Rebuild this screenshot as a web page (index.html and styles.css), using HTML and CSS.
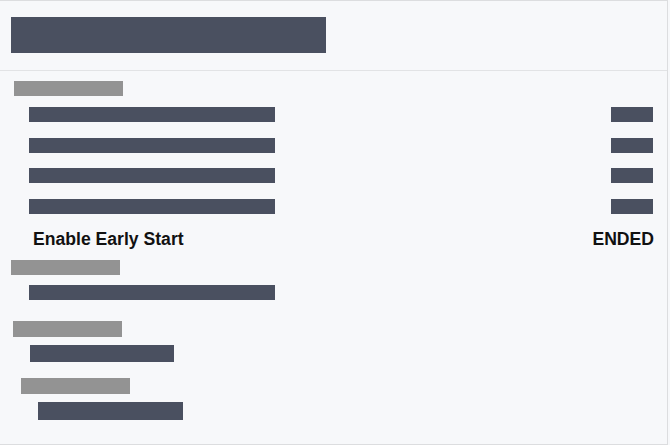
FILE: index.html
```html
<!DOCTYPE html>
<html lang="en">
<head>
<meta charset="UTF-8">
<meta name="viewport" content="width=device-width, initial-scale=1.0">
<title>Schedule</title>
<link rel="stylesheet" href="styles.css">
</head>
<body>
  <div class="panel">
    <div class="header">
      <div class="bar title"></div>
    </div>

    <div class="content">
      <!-- Group one -->
      <div class="group first">
        <div class="label"></div>
        <div class="rows">
          <div class="row"><div class="bar wide"></div><div class="bar tag"></div></div>
          <div class="row"><div class="bar wide"></div><div class="bar tag"></div></div>
          <div class="row"><div class="bar wide"></div><div class="bar tag"></div></div>
          <div class="row"><div class="bar wide"></div><div class="bar tag"></div></div>
        </div>
        <div class="status-row">
          <span>Enable Early Start</span>
          <span>ENDED</span>
        </div>
      </div>

      <!-- Group two -->
      <div class="group second">
        <div class="label"></div>
        <div class="bar wide"></div>
      </div>

      <!-- Group three -->
      <div class="group third">
        <div class="label"></div>
        <div class="bar short"></div>
      </div>

      <!-- Group four -->
      <div class="group fourth">
        <div class="label"></div>
        <div class="bar short"></div>
      </div>
    </div>
  </div>
</body>
</html>
```

FILE: styles.css
```css
body {
  margin: 0;
  padding: 0;
  background-color: #f7f8fa;
  font-family: "Liberation Sans", Arial, sans-serif;
}

.panel {
  width: 668px;
  height: 445px;
  box-sizing: border-box;
  border: 1px solid #dcdddf;
  border-left: none;
  background-color: #f7f8fa;
}

.header {
  height: 70px;
  box-sizing: border-box;
  padding: 16px 0 0 11px;
  border-bottom: 1px solid #e2e3e5;
}

.bar {
  background-color: #4a5060;
}

.title {
  width: 315px;
  height: 36px;
}

.content {
  padding-top: 10px;
}

.label {
  width: 109px;
  height: 15px;
  background-color: #939393;
}

.wide {
  width: 246px;
  height: 15px;
}

.tag {
  width: 42px;
  height: 15px;
}

.short {
  height: 17px;
}

/* group one */
.first .label {
  margin-left: 14px;
}

.rows {
  display: flex;
  flex-direction: column;
  gap: 15.5px;
  margin-top: 11px;
  padding: 0 14px 0 29px;
}

.row {
  display: flex;
  justify-content: space-between;
}

.status-row {
  display: flex;
  justify-content: space-between;
  margin-top: 15px;
  padding: 0 13px 0 33px;
  font-size: 17.6px;
  font-weight: bold;
  line-height: 20px;
  color: #111;
}

/* group two */
.second {
  margin-top: 11px;
}

.second .label {
  margin-left: 11px;
}

.second .wide {
  margin: 10px 0 0 29px;
}

/* group three */
.third {
  margin-top: 21px;
}

.third .label {
  margin-left: 13px;
  height: 16px;
}

.third .short {
  width: 144px;
  margin: 8px 0 0 30px;
}

/* group four */
.fourth {
  margin-top: 16px;
}

.fourth .label {
  margin-left: 21px;
  height: 16px;
}

.fourth .short {
  width: 145px;
  height: 18px;
  margin: 8px 0 0 38px;
}
```
